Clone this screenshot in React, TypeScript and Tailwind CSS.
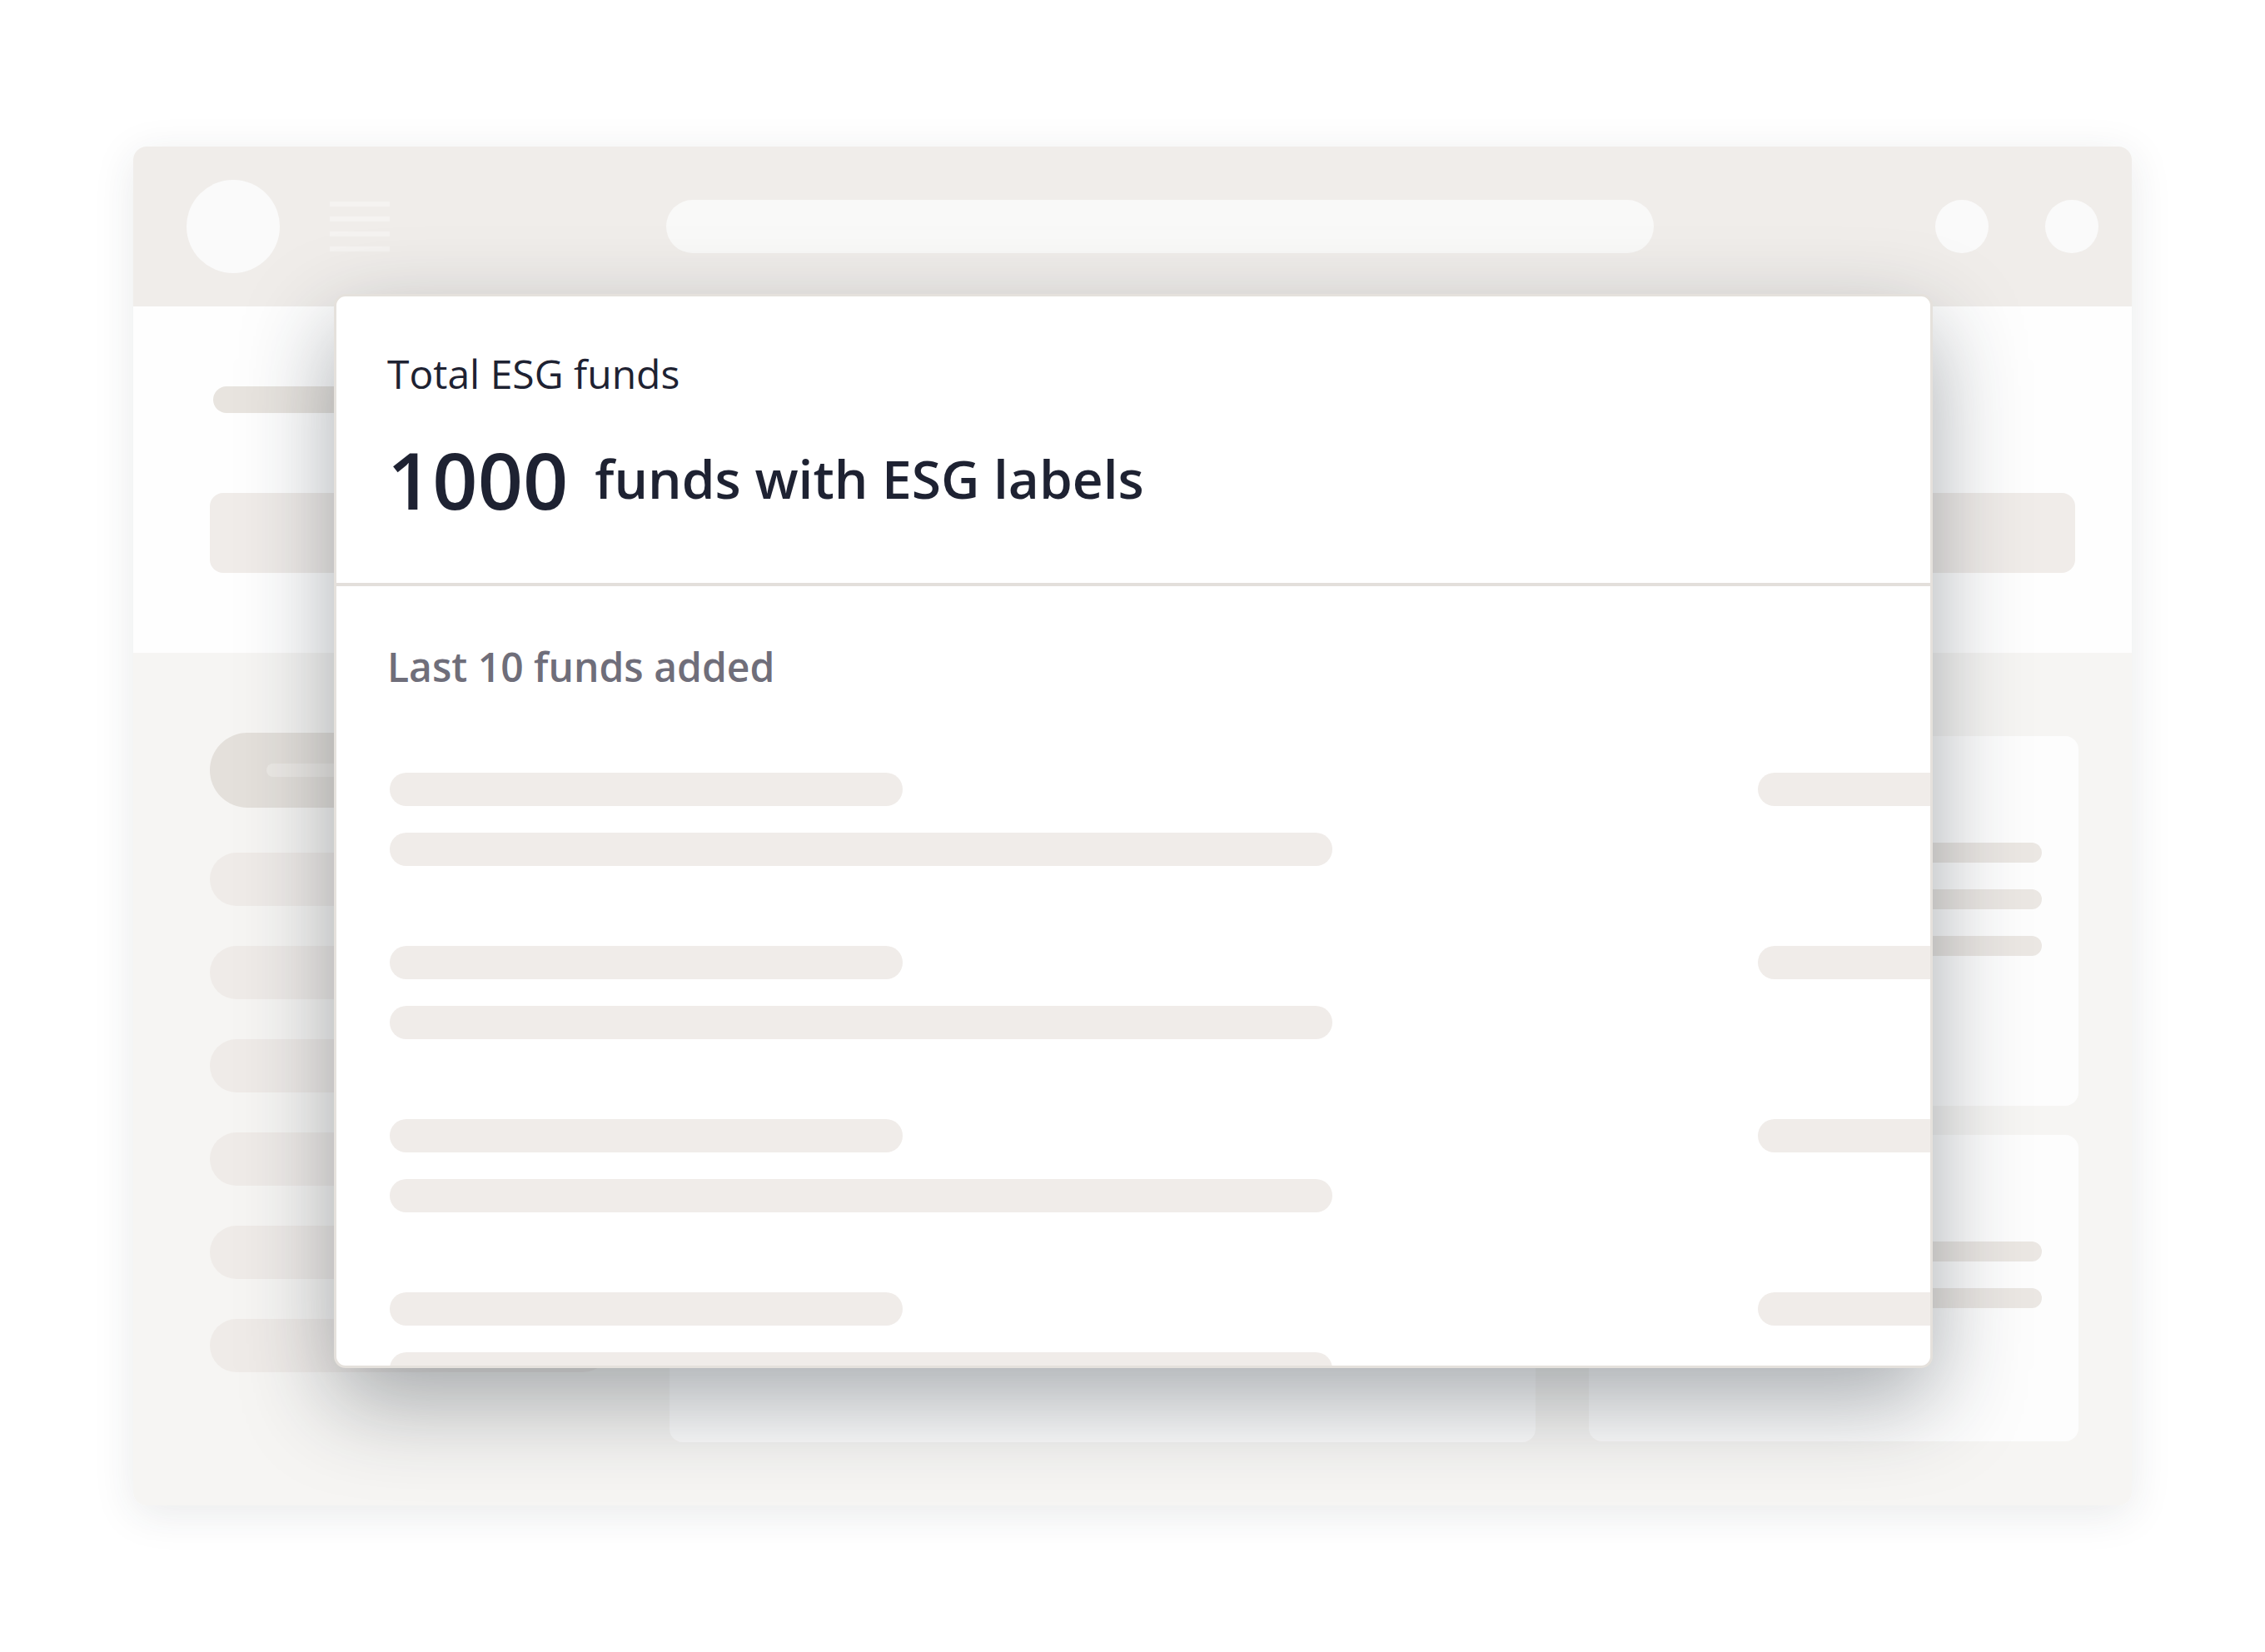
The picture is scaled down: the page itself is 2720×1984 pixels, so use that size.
import React from "react";

const font = { fontFamily: '"Open Sans", "Noto Sans", sans-serif' };

function SkeletonRow() {
  return (
    <div className="flex shrink-0">
      <div className="flex w-[1643px] shrink-0 flex-col gap-[32px]">
        <div className="h-[40px] w-[616px] rounded-full bg-[#f0ece9]" />
        <div className="h-[40px] w-[1132px] rounded-full bg-[#f0ece9]" />
      </div>
      <div className="h-[40px] w-[400px] shrink-0 rounded-full bg-[#f0ece9]" />
    </div>
  );
}

export default function App() {
  return (
    <div className="h-[1984px] w-[2720px] bg-white pl-[160px] pt-[176px]" style={font}>
      <div className="relative h-[1632px] w-[2400px] rounded-[16px] shadow-[0_10px_50px_rgba(40,50,60,0.10)]">
        <div className="h-full w-full overflow-hidden rounded-[16px]">
          {/* header */}
          <div className="flex h-[192px] items-center bg-[#f0edea] pl-[64px] pr-[40px]">
            <div className="h-[112px] w-[112px] shrink-0 rounded-full bg-[#fafafa]" />
            <div className="ml-[60px] flex w-[72px] shrink-0 flex-col gap-[12px]">
              <div className="h-[6px] bg-[#f5f3f1]" />
              <div className="h-[6px] bg-[#f5f3f1]" />
              <div className="h-[6px] bg-[#f5f3f1]" />
              <div className="h-[6px] bg-[#f5f3f1]" />
            </div>
            <div className="ml-[332px] h-[64px] w-[1186px] shrink-0 rounded-full bg-[#f9f9f8]" />
            <div className="ml-[338px] h-[64px] w-[64px] shrink-0 rounded-full bg-[#fafafa]" />
            <div className="ml-[68px] h-[64px] w-[64px] shrink-0 rounded-full bg-[#fafafa]" />
          </div>
          {/* white section */}
          <div className="flex h-[416px] flex-col bg-[#fefefe] pl-[92px] pr-[68px] pt-[96px]">
            <div className="ml-[4px] h-[32px] w-[420px] rounded-full bg-[#e8e4df]" />
            <div className="mt-[96px] h-[96px] w-full rounded-[16px] bg-[#f0ece9]" />
          </div>
          {/* gray section */}
          <div className="flex h-[1024px] bg-[#f6f5f3] px-[92px] pt-[96px]">
            <div className="flex w-[480px] shrink-0 flex-col">
              <div className="flex h-[90px] items-center rounded-full bg-[#e4e0db] pl-[68px]">
                <div className="h-[16px] w-[300px] rounded-full bg-[#ece9e5]" />
              </div>
              <div className="mt-[54px] flex flex-col gap-[48px]">
                <div className="h-[64px] rounded-full bg-[#efebe8]" />
                <div className="h-[64px] rounded-full bg-[#efebe8]" />
                <div className="h-[64px] rounded-full bg-[#efebe8]" />
                <div className="h-[64px] rounded-full bg-[#efebe8]" />
                <div className="h-[64px] rounded-full bg-[#efebe8]" />
                <div className="h-[64px] rounded-full bg-[#efebe8]" />
              </div>
            </div>
            <div className="ml-[72px] mt-[4px] h-[848px] w-[1040px] shrink-0 rounded-[16px] bg-[#fdfdfd]" />
            <div className="ml-[64px] mt-[4px] flex w-[588px] shrink-0 flex-col">
              <div className="flex h-[444px] flex-col items-end gap-[32px] rounded-[16px] bg-[#fdfdfd] pr-[44px] pt-[128px]">
                <div className="h-[24px] w-[420px] rounded-full bg-[#ebe7e3]" />
                <div className="h-[24px] w-[420px] rounded-full bg-[#ebe7e3]" />
                <div className="h-[24px] w-[420px] rounded-full bg-[#ebe7e3]" />
              </div>
              <div className="mt-[35px] flex h-[368px] flex-col items-end gap-[32px] rounded-[16px] bg-[#fdfdfd] pr-[44px] pt-[128px]">
                <div className="h-[24px] w-[420px] rounded-full bg-[#ebe7e3]" />
                <div className="h-[24px] w-[420px] rounded-full bg-[#ebe7e3]" />
              </div>
            </div>
          </div>
        </div>

        {/* overlay card */}
        <div className="absolute left-[241px] top-[177px] flex h-[1290px] w-[1920px] flex-col overflow-hidden rounded-[14px] border-[3px] border-[#e5e1dc] bg-white shadow-[0_40px_110px_rgba(30,40,50,0.38)]">
          <div className="flex h-[348px] shrink-0 flex-col border-b-[4px] border-[#e3dfdb] pl-[61px]">
            <div className="mt-[69px] text-[48px] leading-none text-[#1e2232]">Total ESG funds</div>
            <div className="mt-[55px] flex items-center text-[#1e2232]">
              <span className="text-[95px] font-semibold leading-none">1000</span>
              <span className="ml-[32px] mt-[-2px] text-[64px] font-semibold leading-none">funds with ESG labels</span>
            </div>
          </div>
          <div className="flex flex-col pl-[61px]">
            <div className="mt-[73px] text-[48px] font-semibold leading-none text-[#6f6e7a]">Last 10 funds added</div>
            <div className="ml-[3px] mt-[103px] flex flex-col gap-[96px]">
              <SkeletonRow />
              <SkeletonRow />
              <SkeletonRow />
              <SkeletonRow />
            </div>
          </div>
        </div>
      </div>
    </div>
  );
}
